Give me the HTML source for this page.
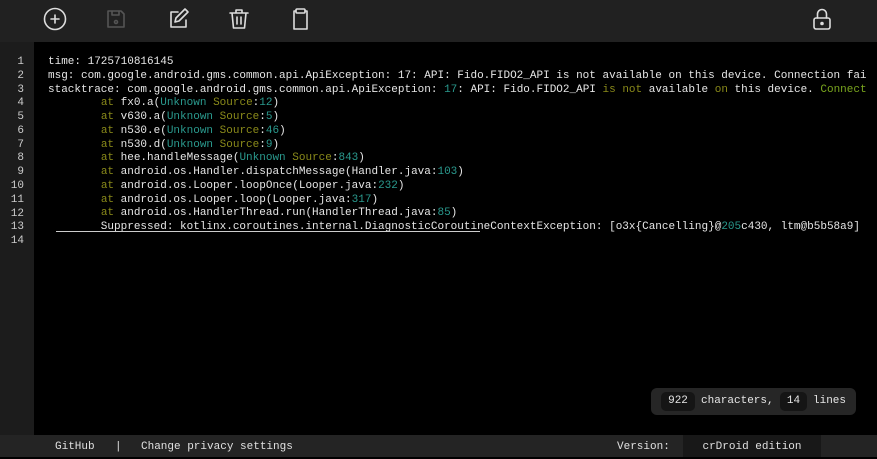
<!DOCTYPE html>
<html><head><meta charset="utf-8"><style>
*{margin:0;padding:0;box-sizing:border-box}
body{width:877px;height:457px;background:#000;overflow:hidden;font-family:"Liberation Mono",monospace;position:relative}
#tb{position:absolute;left:0;top:0;width:877px;height:42px;background:#212121}
#tb svg{position:absolute;top:7px;width:24px;height:24px;fill:none;stroke:#ddd;stroke-width:1.6;stroke-linecap:round;stroke-linejoin:round}
#gut{position:absolute;left:0;top:44px;width:34px;height:391px;background:#1c1c1c}
#gutbg{position:absolute;left:0;top:42px;width:34px;height:393px;background:#1c1c1c}
.ln{position:absolute;left:0;width:24px;text-align:right;font-size:11px;color:#ccc}
#code{position:absolute;left:48px;top:56px;font-size:11px;line-height:13.77px;color:#e6e6e6;white-space:pre}
.o{color:#8a8a1a}.t{color:#2a9a8e}.g{color:#7aa61e}
#stat{position:absolute;left:651px;top:388px;width:205px;height:27px;background:#262626;border-radius:6px;font-size:11px;color:#e6e6e6}
.pill{position:absolute;top:4px;height:19px;line-height:19px;background:#151515;border-radius:5px;text-align:center}
#ft{position:absolute;left:0;top:435px;width:877px;height:22px;background:#242424;font-family:"Liberation Mono",monospace;font-size:11px;color:#e0e0e0;line-height:24px}
#ft span{position:absolute;top:0;height:22px}
</style></head><body>
<div id="tb">
<svg style="left:43px" viewBox="0 0 24 24"><circle cx="12" cy="12" r="10.5"/><path d="M12 8v8M8 12h8"/></svg>
<svg style="left:104px;stroke:#555" viewBox="0 0 24 24"><path d="M4 4h13l3 3v13H4z"/><path d="M8 4v4h7V4"/><circle cx="12" cy="15" r="1.5"/></svg>
<svg style="left:166px" viewBox="0 0 24 24"><path d="M12 5H5v15h15v-7"/><path d="M9 15l1-4 9-9 3 3-9 9z"/></svg>
<svg style="left:227px" viewBox="0 0 24 24"><path d="M3 6h18M9 6V3h6v3M5 6l1.5 15h11L19 6M10 10v7M14 10v7"/></svg>
<svg style="left:288px" viewBox="0 0 24 24"><path d="M8 4H6v18h13V4h-2"/><rect x="8" y="2" width="9" height="4" rx="1"/></svg>
<svg style="left:810px" viewBox="0 0 24 24"><rect x="4" y="11" width="16" height="11" rx="2"/><path d="M7.5 11V7a4.5 4.5 0 0 1 9 0v4"/><circle cx="12" cy="16.5" r="1" fill="#ddd"/></svg>
</div>
<div id="gutbg"></div>
<div id="gut">
<div class="ln" style="top:12px">1</div><div class="ln" style="top:25.8px">2</div><div class="ln" style="top:39.5px">3</div><div class="ln" style="top:53.3px">4</div><div class="ln" style="top:67.1px">5</div><div class="ln" style="top:80.8px">6</div><div class="ln" style="top:94.6px">7</div><div class="ln" style="top:108.4px">8</div><div class="ln" style="top:122.2px">9</div><div class="ln" style="top:135.9px">10</div><div class="ln" style="top:149.7px">11</div><div class="ln" style="top:163.5px">12</div><div class="ln" style="top:177.2px">13</div><div class="ln" style="top:191px">14</div>
</div>
<div id="code">time: 1725710816145
msg: com.google.android.gms.common.api.ApiException: 17: API: Fido.FIDO2_API is not available on this device. Connection fai
stacktrace: com.google.android.gms.common.api.ApiException: <span class="t">17</span>: API: Fido.FIDO2_API <span class="o">is not</span> available <span class="o">on</span> this device. <span class="g">Connect</span>
        <span class="o">at</span> fx0.a(<span class="t">Unknown</span> <span class="o">Source</span>:<span class="t">12</span>)
        <span class="o">at</span> v630.a(<span class="t">Unknown</span> <span class="o">Source</span>:<span class="t">5</span>)
        <span class="o">at</span> n530.e(<span class="t">Unknown</span> <span class="o">Source</span>:<span class="t">46</span>)
        <span class="o">at</span> n530.d(<span class="t">Unknown</span> <span class="o">Source</span>:<span class="t">9</span>)
        <span class="o">at</span> hee.handleMessage(<span class="t">Unknown</span> <span class="o">Source</span>:<span class="t">843</span>)
        <span class="o">at</span> android.os.Handler.dispatchMessage(Handler.java:<span class="t">103</span>)
        <span class="o">at</span> android.os.Looper.loopOnce(Looper.java:<span class="t">232</span>)
        <span class="o">at</span> android.os.Looper.loop(Looper.java:<span class="t">317</span>)
        <span class="o">at</span> android.os.HandlerThread.run(HandlerThread.java:<span class="t">85</span>)
        Suppressed: kotlinx.coroutines.internal.DiagnosticCoroutineContextException: [o3x{Cancelling}@<span class="t">205</span>c430, ltm@b5b58a9]
</div>
<div style="position:absolute;left:56px;top:231px;width:424px;height:1px;background:#ccc"></div>
<div id="stat">
<div class="pill" style="left:10px;width:34px">922</div>
<span style="position:absolute;left:50px;top:4px;line-height:19px">characters,</span>
<div class="pill" style="left:129px;width:27px">14</div>
<span style="position:absolute;left:162px;top:4px;line-height:19px">lines</span>
</div>
<div id="ft">
<span style="left:55px">GitHub</span>
<span style="left:115px">|</span>
<span style="left:141px">Change privacy settings</span>
<span style="left:617px">Version:</span>
<span style="left:683px;width:138px;background:#181818;text-align:center">crDroid edition</span>
</div>
</body></html>
